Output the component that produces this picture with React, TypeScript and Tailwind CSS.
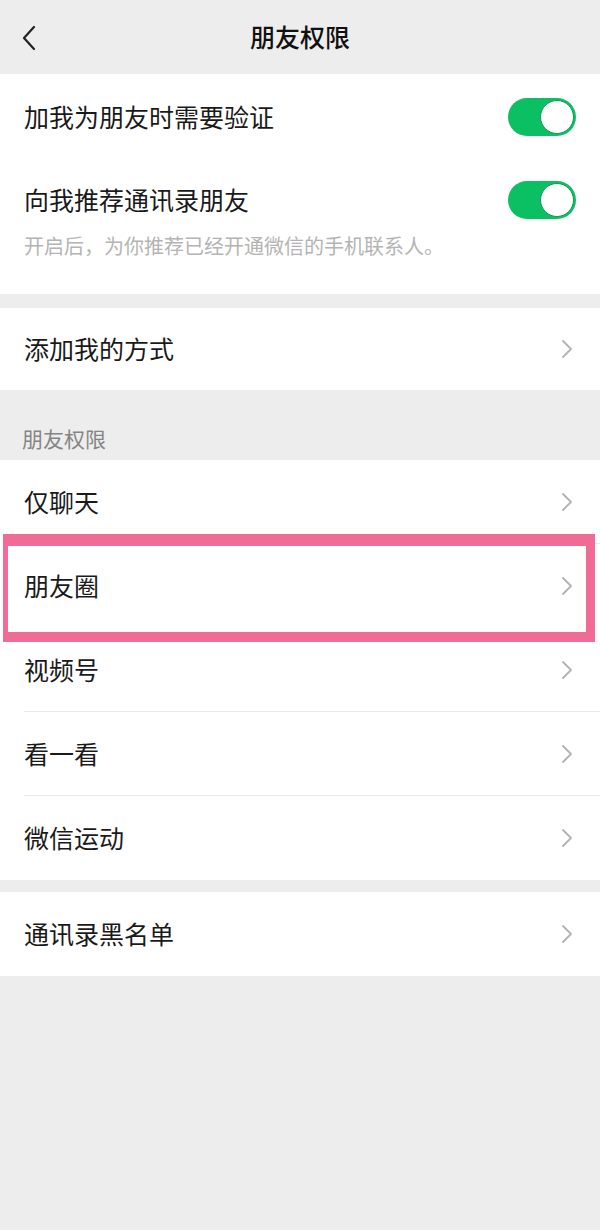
import React from 'react';

const font = { fontFamily: '"Noto Sans CJK SC", "Noto Sans", sans-serif' };

const Chevron: React.FC = () => (
    <svg width="14" height="22" viewBox="0 0 14 22" fill="none" className="shrink-0">
        <path d="M3 3l8 8-8 8" stroke="#b3b3b3" strokeWidth="1.8" strokeLinecap="round" strokeLinejoin="round" />
    </svg>
);

const Toggle: React.FC = () => (
    <div className="w-[68px] h-[38px] rounded-full bg-[#0bbf63] p-[2px] flex justify-end">
        <div className="w-[34px] h-[34px] rounded-full bg-white border border-[#0e9a52]" />
    </div>
);

const Row: React.FC<{ label: string; divider?: boolean; h?: string }> = ({ label, divider, h = 'h-[84px]' }) => (
    <div className="relative">
        <div className={`${h} flex items-center justify-between pl-[24px] pr-[26px]`}>
            <span className="text-[25px] text-[#1a1a1a]">{label}</span>
            <Chevron />
        </div>
        {divider && <div className="absolute bottom-0 left-[24px] right-0 h-px bg-[#e8e8e8]" />}
    </div>
);

const permRows = ['仅聊天', '朋友圈', '视频号', '看一看', '微信运动'];

export default function App() {
    return (
        <div className="w-[600px] min-h-[1230px] bg-[#ededed]" style={font}>
            <header className="relative h-[74px] flex items-center justify-center">
                <svg className="absolute left-[19px] top-[24px]" width="22" height="28" viewBox="0 0 22 28" fill="none">
                    <path d="M15 3L5 14l10 11" stroke="#222" strokeWidth="2.2" strokeLinecap="round" strokeLinejoin="round" />
                </svg>
                <h1 className="text-[25px] font-medium text-[#111]">朋友权限</h1>
            </header>

            <section className="bg-white">
                <div className="h-[86px] flex items-center justify-between pl-[24px] pr-[24px]">
                    <span className="text-[25px] text-[#1a1a1a]">加我为朋友时需要验证</span>
                    <Toggle />
                </div>
                <div className="pt-[22px] pb-[34px] pl-[24px] pr-[24px]">
                    <div className="h-[36px] flex items-center justify-between">
                        <span className="text-[25px] text-[#1a1a1a]">向我推荐通讯录朋友</span>
                        <Toggle />
                    </div>
                    <p className="mt-[14px] text-[20px] leading-[28px] text-[#b4b4b4]">开启后，为你推荐已经开通微信的手机联系人。</p>
                </div>
            </section>

            <section className="bg-white mt-[14px]">
                <Row label="添加我的方式" h="h-[82px]" />
            </section>

            <div className="pt-[36px] pb-[10px] pl-[22px] text-[21px] leading-[24px] text-[#858585]">朋友权限</div>

            <section className="relative bg-white">
                {permRows.map((r, i) => (
                    <Row key={r} label={r} divider={i < permRows.length - 1 && i !== 1} />
                ))}
                {/* annotation highlight over 朋友圈 */}
                <div className="absolute left-[3px] right-[5px] top-[74px] h-[108px] border-[#f06b96] border-t-[12px] border-b-[10px] border-l-[5px] border-r-[9px]" />
            </section>

            <section className="bg-white mt-[12px]">
                <Row label="通讯录黑名单" />
            </section>
        </div>
    );
}
